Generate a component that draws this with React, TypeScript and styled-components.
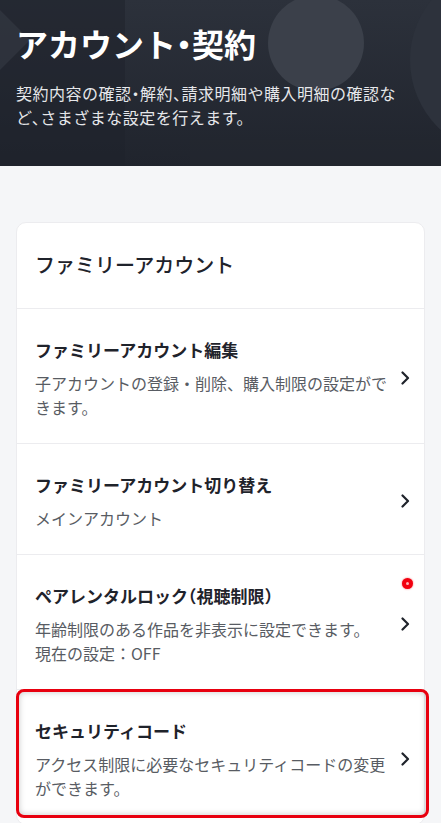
import React from 'react'
import styled, { createGlobalStyle } from 'styled-components'

const GlobalStyle = createGlobalStyle`
  body {
    margin: 0;
    background: #f5f6f8;
    font-family: "Noto Sans CJK JP", "Noto Sans", sans-serif;
    font-feature-settings: "halt";
    -webkit-font-smoothing: antialiased;
  }
`

const Page = styled.div`
  min-height: 823px;
  background: #f5f6f8;
`

const Hero = styled.header`
  position: relative;
  overflow: hidden;
  height: 166px;
  box-sizing: border-box;
  padding: 22px 32px 0 16px;
  background: #272c36;
  color: #fff;
`

const HeroArt = styled.svg`
  position: absolute;
  inset: 0;
  width: 100%;
  height: 100%;
`

const HeroText = styled.div`
  position: relative;
`

const Title = styled.h1`
  margin: 0;
  font-size: 32px;
  line-height: 42px;
  font-weight: 700;
`

const Lead = styled.p`
  margin: 17px 0 0;
  font-size: 16px;
  line-height: 24px;
  letter-spacing: 0.5px;
  font-weight: 400;
  color: #e6e7ea;
`

const Main = styled.main`
  padding: 56px 16px 0;
`

const Card = styled.section`
  background: #fff;
  border: 1px solid #ececef;
  border-radius: 10px;
`

const CardHead = styled.h2`
  margin: 0;
  padding: 27px 18px 28px;
  font-size: 20px;
  line-height: 30px;
  font-weight: 500;
  color: #1f232b;
  border-bottom: 1px solid #ececef;
`

const Row = styled.div<{ $last?: boolean }>`
  position: relative;
  display: flex;
  align-items: center;
  padding: 28px 6px 24px 18px;
  border-bottom: ${({ $last }) => ($last ? 'none' : '1px solid #ececef')};
`

const RowText = styled.div`
  flex: 1;
  min-width: 0;
`

const RowTitle = styled.div`
  font-size: 17px;
  line-height: 26px;
  font-weight: 700;
  color: #1f232b;
`

const RowDesc = styled.div`
  margin-top: 8px;
  font-size: 16px;
  line-height: 24px;
  font-feature-settings: normal;
  color: #585c63;
`

const Chevron = styled.div`
  width: 26px;
  display: flex;
  justify-content: center;
  color: #1f232b;
`

const Dot = styled.span`
  position: absolute;
  top: 23px;
  right: 11px;
  width: 11px;
  height: 11px;
  border-radius: 50%;
  background: #f2000f;
  box-shadow: 0 0 2px rgba(242, 0, 15, 0.6);
  &::after {
    content: '';
    position: absolute;
    left: 4px;
    top: 4px;
    width: 3px;
    height: 3px;
    border-radius: 50%;
    background: rgba(255, 255, 255, 0.7);
  }
`

const Highlight = styled.span`
  position: absolute;
  top: -1px;
  left: -1px;
  right: -5px;
  bottom: 6px;
  border: 3px solid #e8000f;
  border-radius: 8px;
  box-shadow: inset 0 0 6px rgba(0, 0, 0, 0.22);
  pointer-events: none;
`

const Arrow = () => (
  <svg width="10" height="14" viewBox="0 0 10 14">
    <polyline points="2.5,1.5 8,7 2.5,12.5" fill="none" stroke="currentColor" strokeWidth="2.2" strokeLinecap="round" strokeLinejoin="round" />
  </svg>
)

type Item = { title: string; desc: string[]; dot?: boolean; marked?: boolean }

const items: Item[] = [
  { title: 'ファミリーアカウント編集', desc: ['子アカウントの登録・削除、購入制限の設定ができます。'] },
  { title: 'ファミリーアカウント切り替え', desc: ['メインアカウント'] },
  { title: 'ペアレンタルロック（視聴制限）', desc: ['年齢制限のある作品を非表示に設定できます。', '現在の設定：OFF'], dot: true },
  { title: 'セキュリティコード', desc: ['アクセス制限に必要なセキュリティコードの変更ができます。'], marked: true },
]

const App = () => (
  <Page>
    <GlobalStyle />
    <Hero>
      <HeroArt viewBox="0 0 441 166" preserveAspectRatio="none">
        <defs>
          <linearGradient id="lg" x1="0" y1="0" x2="0" y2="1">
            <stop offset="0" stopColor="#2c313b" />
            <stop offset="1" stopColor="#20242d" />
          </linearGradient>
        </defs>
        <rect x="0" y="0" width="441" height="166" fill="url(#lg)" />
        <rect x="0" y="0" width="125" height="166" fill="#1f232c" opacity="0.55" />
        <path d="M0 10 L30 40 L0 70 Z" fill="#363b45" opacity="0.6" />
        <circle cx="316" cy="43" r="48" fill="#3b404a" />
        <circle cx="505" cy="60" r="95" fill="#2d323c" />
        <rect x="190" y="140" width="251" height="26" fill="#232730" opacity="0.5" />
      </HeroArt>
      <HeroText>
        <Title>アカウント・契約</Title>
        <Lead>契約内容の確認・解約、請求明細や購入明細の確認など、さまざまな設定を行えます。</Lead>
      </HeroText>
    </Hero>
    <Main>
      <Card>
        <CardHead>ファミリーアカウント</CardHead>
        {items.map((it, i) => (
          <Row key={it.title} $last={i === items.length - 1}>
            <RowText>
              <RowTitle>{it.title}</RowTitle>
              <RowDesc>
                {it.desc.map((d, j) => (
                  <div key={j}>{d}</div>
                ))}
              </RowDesc>
            </RowText>
            <Chevron>
              <Arrow />
            </Chevron>
            {it.dot && <Dot />}
            {it.marked && <Highlight />}
          </Row>
        ))}
      </Card>
    </Main>
  </Page>
)

export default App
